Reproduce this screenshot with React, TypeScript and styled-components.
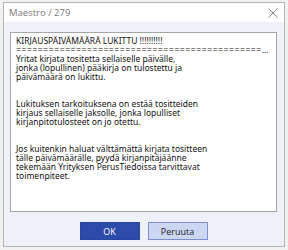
import styled, { createGlobalStyle } from 'styled-components';

const GlobalStyle = createGlobalStyle`
  html, body {
    margin: 0;
    padding: 0;
    background: #f2f2f2;
  }
  body {
    width: 288px;
    height: 250px;
    overflow: hidden;
    font-family: 'Noto Sans', 'Open Sans', sans-serif;
  }
`;

const paragraphs: string[][] = [
  ['Yritat kirjata tositetta sellaiselle päivälle,', 'jonka (lopullinen) pääkirja on tulostettu ja', 'päivämäärä on lukittu.'],
  ['Lukituksen tarkoituksena on estää tositteiden', 'kirjaus sellaiselle jaksolle, jonka lopulliset', 'kirjanpitotulosteet on jo otettu.'],
  [
    'Jos kuitenkin haluat välttämättä kirjata tositteen',
    'tälle päivämäärälle, pyydä kirjanpitäjäänne',
    'tekemään Yrityksen PerusTiedoissa tarvittavat',
    'toimenpiteet.',
  ],
];

function CloseIcon() {
  return (
    <svg width="10" height="10" viewBox="0 0 10 10">
      <path d="M0.5 0.5 L9.5 9.5 M9.5 0.5 L0.5 9.5" stroke="#8a8a8a" strokeWidth="1" fill="none" />
    </svg>
  );
}

function App() {
  return (
    <>
      <GlobalStyle />
      <Styled.Page>
        <Styled.Window>
          <Styled.TitleBar>
            <Styled.Title>Maestro / 279</Styled.Title>
            <Styled.Close>
              <CloseIcon />
            </Styled.Close>
          </Styled.TitleBar>
          <Styled.Body>
            <Styled.MessageBox>
              <Styled.Line>KIRJAUSPÄIVÄMÄÄRÄ LUKITTU !!!!!!!!!!</Styled.Line>
              <Styled.Rule>{'='.repeat(80)}</Styled.Rule>
              {paragraphs.map((lines, i) => (
                <Styled.Paragraph key={i} isFirst={i === 0}>
                  {lines.map((line) => (
                    <Styled.Line key={line}>{line}</Styled.Line>
                  ))}
                </Styled.Paragraph>
              ))}
            </Styled.MessageBox>
            <Styled.Buttons>
              <Styled.Button primary>OK</Styled.Button>
              <Styled.Button>Peruuta</Styled.Button>
            </Styled.Buttons>
          </Styled.Body>
        </Styled.Window>
      </Styled.Page>
    </>
  );
}

export default App;

const Styled = {
  Page: styled.div`
    padding: 2px 3px 0 3px;
  `,
  Window: styled.div`
    display: flex;
    flex-direction: column;
    width: 282px;
    height: 245px;
    box-sizing: border-box;
    border: 1px solid #b4b4b4;
    background: #eef1f9;
  `,
  TitleBar: styled.div`
    display: flex;
    align-items: center;
    justify-content: space-between;
    height: 20px;
    padding: 0 6px 0 5px;
    background: #ffffff;
  `,
  Title: styled.span`
    font-family: 'Open Sans', sans-serif;
    font-size: 9.5px;
    color: #7a7a7a;
  `,
  Close: styled.span`
    display: flex;
    align-items: center;
    padding-top: 1px;
  `,
  Body: styled.div`
    display: flex;
    flex-direction: column;
    flex: 1;
    padding: 10px 7px 6px 6px;
  `,
  MessageBox: styled.div`
    height: 180px;
    box-sizing: border-box;
    border: 1px solid #a6a6a6;
    background: #ffffff;
    padding: 3px 6px 0 5px;
    font-size: 8.5px;
    line-height: 9px;
    color: #111111;
  `,
  Line: styled.div`
    white-space: nowrap;
  `,
  Rule: styled.div`
    white-space: nowrap;
    overflow: hidden;
    text-overflow: ellipsis;
    letter-spacing: 0.6px;
  `,
  Paragraph: styled.div<{ isFirst: boolean }>`
    margin-top: ${({ isFirst }) => (isFirst ? '0' : '18px')};
  `,
  Buttons: styled.div`
    display: flex;
    justify-content: center;
    gap: 8px;
    margin-top: 10px;
  `,
  Button: styled.button<{ primary?: boolean }>`
    width: 60px;
    height: 18px;
    padding: 0;
    box-sizing: border-box;
    font-family: 'Open Sans', sans-serif;
    font-size: 9px;
    border: 1px solid ${({ primary }) => (primary ? '#2a46a0' : '#7c8ecb')};
    background: ${({ primary }) => (primary ? '#2d4ba8' : '#ccd6f1')};
    color: ${({ primary }) => (primary ? '#ffffff' : '#1e1e1e')};
  `,
};
